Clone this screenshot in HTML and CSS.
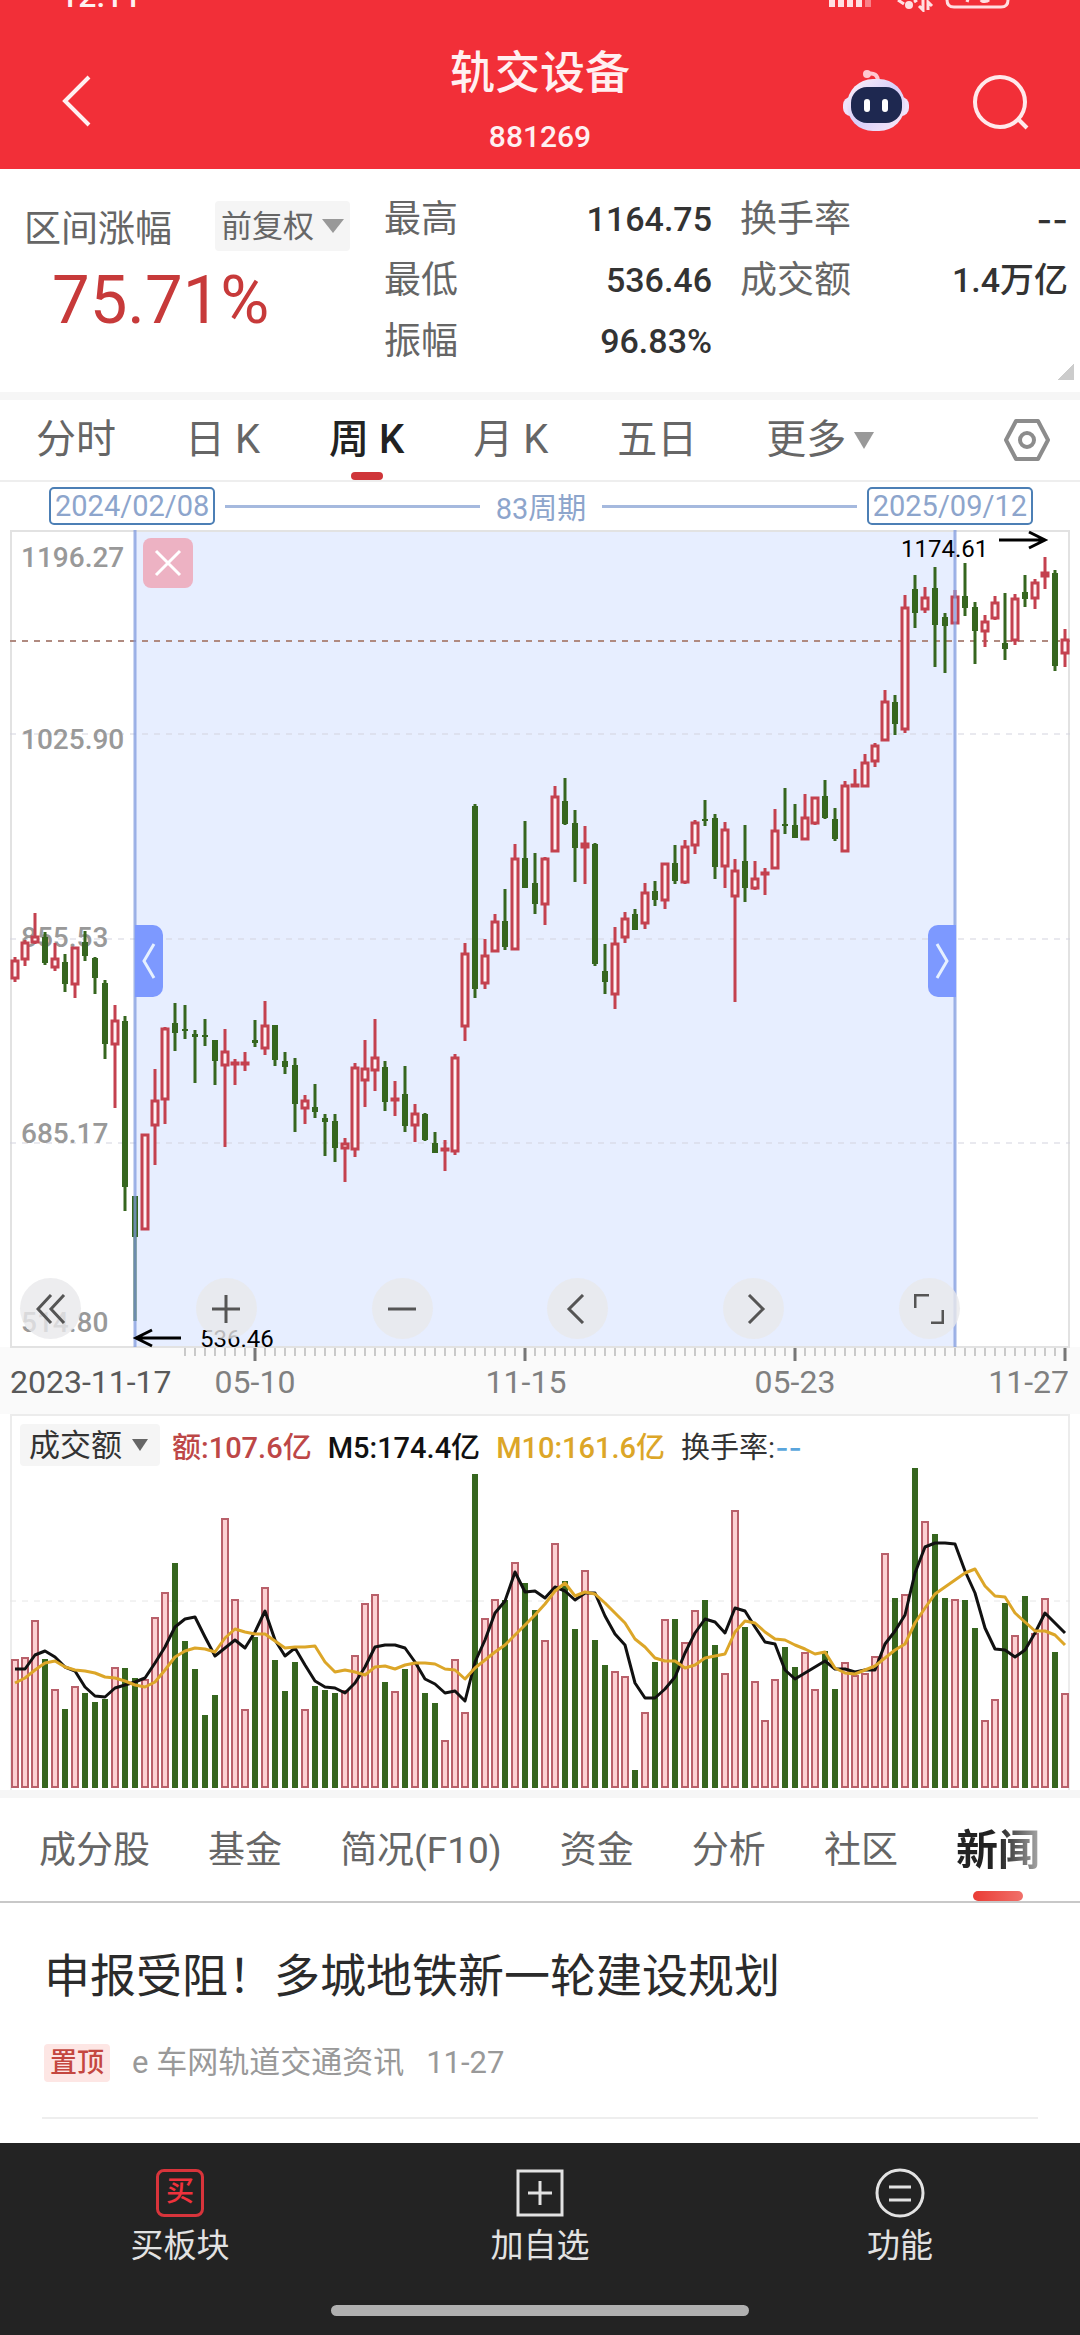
FILE: index.html
```html
<!DOCTYPE html>
<html lang="zh-CN">
<head>
    <meta charset="UTF-8">
    <meta name="viewport" content="width=device-width, initial-scale=1.0">
    <title>轨交设备 881269</title>
    <link rel="stylesheet" href="styles.css">
</head>
<body>
    <header class="header">
        <div class="status">
            <span class="status-time">12:11</span>
            <svg class="status-icons" width="184" height="12" viewBox="0 0 184 12" aria-hidden="true">
                <path d="M3 0h6v7h-6zM12 0h6v7h-6zM21 0h6v7h-6zM30 0h6v7h-6z" fill="#ffdfe2"/>
                <path d="M39 0h6v7h-6z" fill="#fa8087"/>
                <path d="M72 0l6 4M91 0l-3 2M97 0v10l-4-4M102 10v-8l4 4" fill="none" stroke="#ffdfe2" stroke-width="3"/>
                <circle cx="83" cy="5" r="4" fill="#ffdfe2"/>
                <path d="M121 0c0 5 3 7 7 7h47c4 0 7-2 7-7" fill="none" stroke="#ffdfe2" stroke-width="3"/>
                <path d="M140 0l3 1M155 0c1 2 6 2 8 0" fill="none" stroke="#ffdfe2" stroke-width="3"/>
            </svg>
        </div>
        <div class="titlebar">
            <a class="back" href="#" aria-label="返回">
                <svg width="32" height="54" viewBox="0 0 32 54"><path d="M29 3L5 27l24 24" fill="none" stroke="#fff0f1" stroke-width="4"/></svg>
            </a>
            <div class="title">
                <h1>轨交设备</h1>
                <p>881269</p>
            </div>
            <div class="title-actions">
                <button type="button" aria-label="智能助手">
                    <svg width="68" height="64" viewBox="0 0 68 64">
                        <defs>
                            <linearGradient id="shell" x1="0" y1="0" x2="1" y2="1">
                                <stop offset="0" stop-color="#fff3f7"/>
                                <stop offset="0.5" stop-color="#d7cffa"/>
                                <stop offset="1" stop-color="#fbeaf6"/>
                            </linearGradient>
                        </defs>
                        <path d="M25 6c7-2 11 1 11 8" fill="none" stroke="#ffc8d0" stroke-width="4"/>
                        <circle cx="25" cy="6" r="4" fill="#ffc8d0"/>
                        <rect x="1" y="29" width="66" height="19" rx="8" fill="#efe2fb"/>
                        <rect x="5" y="11" width="58" height="52" rx="26" fill="url(#shell)"/>
                        <rect x="9" y="19" width="51" height="36" rx="16" fill="#1e2850"/>
                        <rect x="22" y="31" width="6" height="13" rx="3" fill="#fff"/>
                        <rect x="40" y="31" width="6" height="13" rx="3" fill="#fff"/>
                    </svg>
                </button>
                <button type="button" aria-label="搜索">
                    <svg width="58" height="58" viewBox="0 0 58 58"><circle cx="28" cy="28" r="25" fill="none" stroke="#ffe9eb" stroke-width="4"/><path d="M46 45l9 9" stroke="#ffe9eb" stroke-width="4"/></svg>
                </button>
            </div>
        </div>
    </header>

    <main>
        <section class="stats">
            <div class="stat-main">
                <div class="stat-head">
                    <span class="stat-label">区间涨幅</span>
                    <span class="picker picker-adjust">
                        <select aria-label="复权方式"><option>前复权</option></select>
                        <svg width="22" height="14" viewBox="0 0 22 14"><path d="M0 0h22L11 14z" fill="#999"/></svg>
                    </span>
                </div>
                <strong class="stat-change">75.71%</strong>
            </div>
            <dl class="stat-list">
                <div><dt>最高</dt><dd>1164.75</dd></div>
                <div><dt>最低</dt><dd>536.46</dd></div>
                <div><dt>振幅</dt><dd>96.83%</dd></div>
            </dl>
            <dl class="stat-list">
                <div><dt>换手率</dt><dd class="dash">--</dd></div>
                <div><dt>成交额</dt><dd>1.4万亿</dd></div>
            </dl>
        </section>

        <nav class="periods">
            <a href="#">分时</a>
            <a href="#">日 K</a>
            <a href="#" class="active">周 K</a>
            <a href="#">月 K</a>
            <a href="#">五日</a>
            <a href="#" class="more">更多<svg width="20" height="17" viewBox="0 0 20 17"><path d="M0 0h20L10 17z" fill="#999"/></svg></a>
            <button type="button" class="settings" aria-label="图表设置">
                <svg width="46" height="42" viewBox="0 0 46 42"><path d="M12 2h22l10 19-10 19H12L2 21z" fill="none" stroke="#8c8c8c" stroke-width="4" stroke-linejoin="round"/><circle cx="23" cy="21" r="7" fill="none" stroke="#8c8c8c" stroke-width="4"/></svg>
            </button>
        </nav>

        <div class="range">
            <time>2024/02/08</time>
            <i></i>
            <span>83周期</span>
            <i></i>
            <time>2025/09/12</time>
        </div>

        <section class="kline">
            <svg id="kline" class="chart" viewBox="0 0 1060 884">
                <rect x="0" y="817" width="1060" height="67" fill="#fafafa"/>
                <rect x="125" y="0" width="820" height="817" fill="#e7eeff"/>
                <path d="M1 0v817M1059 0v817M0 1h1060M0 817h1060" stroke="#e2e2e2" stroke-width="2" fill="none"/>
                <path d="M0 204h1060M0 409h1060M0 613h1060" stroke="#d3d3de" stroke-dasharray="6 6"/>
                <path d="M0 111h1060" stroke="#b08a80" stroke-width="2" stroke-dasharray="6 6"/>
                <g class="axis-y">
                    <text x="11" y="37">1196.27</text>
                    <text x="11" y="219">1025.90</text>
                    <text x="11" y="417">855.53</text>
                    <text x="11" y="613">685.17</text>
                    <text x="11" y="802">514.80</text>
                </g>
                <g id="candles"></g>
                <path d="M125 0v817M945 0v817" stroke="#7f9ade" stroke-opacity="0.75" stroke-width="3"/>
                <g class="marks">
                    <text x="891" y="27">1174.61</text>
                    <text x="190" y="817">536.46</text>
                    <path d="M989 10h45M1019 2l16 8-16 8"/>
                    <path d="M171 808h-44M142 800l-16 8 16 8"/>
                </g>
                <g id="ticks"></g>
                <g class="axis-x">
                    <text x="0" y="863" class="first">2023-11-17</text>
                    <text x="245" y="863" text-anchor="middle">05-10</text>
                    <text x="516" y="863" text-anchor="middle">11-15</text>
                    <text x="785" y="863" text-anchor="middle">05-23</text>
                    <text x="1059" y="863" text-anchor="end">11-27</text>
                </g>
            </svg>
            <button type="button" class="close" aria-label="关闭区间">
                <svg width="28" height="28" viewBox="0 0 28 28"><path d="M2 2l24 24M26 2L2 26" stroke="#fff" stroke-width="3"/></svg>
            </button>
            <button type="button" class="handle handle-left" aria-label="区间起点">
                <svg width="14" height="38" viewBox="0 0 14 38"><path d="M12 2L2 19l10 17" fill="none" stroke="#e6f0ff" stroke-width="3"/></svg>
            </button>
            <button type="button" class="handle handle-right" aria-label="区间终点">
                <svg width="14" height="38" viewBox="0 0 14 38"><path d="M2 2l10 17L2 36" fill="none" stroke="#e6f0ff" stroke-width="3"/></svg>
            </button>
            <div class="tools">
                <button type="button" aria-label="最早"><svg viewBox="0 0 30 30"><path d="M15 1L2 15l13 14M28 1L15 15l13 14"/></svg></button>
                <button type="button" aria-label="放大"><svg viewBox="0 0 30 30"><path d="M15 1v28M1 15h28"/></svg></button>
                <button type="button" aria-label="缩小"><svg viewBox="0 0 30 30"><path d="M1 15h28"/></svg></button>
                <button type="button" aria-label="左移"><svg viewBox="0 0 30 30"><path d="M20 1L6 15l14 14"/></svg></button>
                <button type="button" aria-label="右移"><svg viewBox="0 0 30 30"><path d="M10 1l14 14-14 14"/></svg></button>
                <button type="button" aria-label="全屏"><svg viewBox="0 0 30 30"><path d="M1 14V1h14M29 16v13H17"/></svg></button>
            </div>
        </section>

        <section class="volume">
            <div class="volume-head">
                <span class="picker picker-volume">
                    <select aria-label="副图指标"><option>成交额</option></select>
                    <svg width="16" height="12" viewBox="0 0 16 12"><path d="M0 0h16L8 12z" fill="#666"/></svg>
                </span>
                <span class="v-amount">额:107.6亿</span>
                <span class="v-m5">M5:174.4亿</span>
                <span class="v-m10">M10:161.6亿</span>
                <span class="v-rate">换手率:<em class="dash">--</em></span>
            </div>
            <svg class="chart" viewBox="0 0 1060 322">
                <path d="M0 133h1060" stroke="#e6e6e6" stroke-dasharray="6 6"/>
                <g id="bars"></g>
                <path id="ma5" fill="none" stroke="#111" stroke-width="3" stroke-linejoin="round"/>
                <path id="ma10" fill="none" stroke="#dca628" stroke-width="3" stroke-linejoin="round"/>
            </svg>
        </section>

        <nav class="sections">
            <a href="#">成分股</a>
            <a href="#">基金</a>
            <a href="#">简况(F10)</a>
            <a href="#">资金</a>
            <a href="#">分析</a>
            <a href="#">社区</a>
            <a href="#" class="active">新闻</a>
        </nav>

        <article class="news">
            <h2><a href="#">申报受阻！多城地铁新一轮建设规划</a></h2>
            <p><span class="tag">置顶</span><span>e 车网轨道交通资讯</span><time>11-27</time></p>
        </article>
    </main>

    <footer class="footer">
        <nav class="actions">
            <a href="#">
                <span class="buy-icon">买</span>
                买板块
            </a>
            <a href="#">
                <svg width="50" height="50" viewBox="0 0 50 50"><path d="M3 3h44v44H3zM25 13v24M13 25h24" fill="none" stroke="#e2e2e2" stroke-width="3"/></svg>
                加自选
            </a>
            <a href="#">
                <svg width="50" height="50" viewBox="0 0 50 50"><circle cx="25" cy="25" r="23" fill="none" stroke="#e2e2e2" stroke-width="3"/><path d="M14 19h22M14 32h22" stroke="#e2e2e2" stroke-width="3"/></svg>
                功能
            </a>
        </nav>
        <div class="home-bar"></div>
    </footer>
    <script src="chart.js"></script>
</body>
</html>
```
FILE: styles.css
```css
* {
    box-sizing: border-box;
}
body {
    margin: 0;
    font-family: Roboto, "Noto Sans CJK SC", sans-serif;
    background-color: #fff;
    color: #333;
}
h1, h2, p, dl, dd {
    margin: 0;
    font-weight: normal;
}
a {
    color: inherit;
    text-decoration: none;
}
button {
    padding: 0;
    border: none;
    background: none;
    cursor: pointer;
}
svg {
    display: block;
}
.dash {
    font-family: Inter, sans-serif;
}

/* header */
.header {
    height: 169px;
    background-color: #f22f38;
    color: #fff0f1;
}
.status {
    display: flex;
    justify-content: space-between;
    height: 12px;
    padding: 0 70px 0 60px;
    overflow: hidden;
}
.status-time {
    margin-top: -22px;
    font-size: 32px;
    font-weight: 500;
    line-height: 36px;
}
.titlebar {
    display: grid;
    grid-template-columns: 1fr auto 1fr;
    padding: 28px 50px 0;
}
.back {
    padding: 34px 0 0 10px;
}
.title {
    text-align: center;
}
.title h1 {
    font-size: 45px;
    font-weight: 500;
    line-height: 68px;
}
.title p {
    font-size: 30px;
    font-weight: 500;
    line-height: 58px;
}
.title-actions {
    display: flex;
    justify-content: flex-end;
    align-items: flex-start;
    gap: 62px;
    padding-top: 28px;
}
.title-actions button:last-child {
    padding-top: 6px;
}

/* interval stats */
.stats {
    display: grid;
    grid-template-columns: 336px 328px 1fr;
    column-gap: 28px;
    padding: 20px 12px 20px 20px;
    border-bottom: 8px solid #f6f6f6;
    background: linear-gradient(135deg, transparent 50%, #ccc 50%) right 6px bottom 12px / 16px 16px no-repeat;
}
.stat-head {
    display: flex;
    align-items: center;
    justify-content: space-between;
    height: 50px;
    margin-top: 12px;
    padding: 0 6px 0 4px;
}
.stat-label {
    font-size: 37px;
    color: #666;
}
.picker {
    position: relative;
    display: flex;
    align-items: center;
    background-color: #f5f5f5;
    border-radius: 4px;
}
.picker select {
    appearance: none;
    border: none;
    background: none;
    font-family: inherit;
    font-size: 31px;
    color: inherit;
}
.picker svg {
    position: absolute;
    pointer-events: none;
}
.picker-adjust {
    color: #666;
}
.picker-adjust select {
    height: 50px;
    padding: 0 36px 0 6px;
}
.picker-adjust svg {
    right: 6px;
}
.stat-change {
    display: block;
    padding-left: 32px;
    font-size: 67px;
    font-weight: normal;
    line-height: 98px;
    color: #c73a3a;
}
.stat-list {
    font-size: 37px;
    line-height: 61px;
}
.stat-list div {
    display: flex;
    justify-content: space-between;
}
.stat-list dt {
    color: #666;
}
.stat-list dd {
    font-size: 34px;
    font-weight: 500;
}

/* period tabs */
.periods {
    display: flex;
    gap: 69px;
    height: 82px;
    padding: 0 30px 0 36px;
    border-bottom: 2px solid #eee;
    font-size: 40px;
    line-height: 80px;
    color: #666;
}
.periods a {
    position: relative;
}
.periods .active {
    font-weight: 500;
    color: #222;
}
.periods .active::after,
.sections .active::after {
    content: "";
    position: absolute;
    left: 50%;
    bottom: 0;
    width: 32px;
    height: 8px;
    margin-left: -16px;
    border-radius: 4px;
    background-color: #cf3539;
}
.more {
    display: flex;
    align-items: center;
    gap: 8px;
}
.settings {
    margin-left: auto;
}

/* selected range */
.range {
    display: flex;
    align-items: center;
    gap: 10px;
    height: 48px;
    padding: 0 47px 0 49px;
    font-size: 29px;
    color: #8da5cc;
}
.range time {
    padding: 0 4px;
    border: 2px solid #4c7fb5;
    border-radius: 5px;
    line-height: 34px;
}
.range i {
    flex: 1;
    height: 3px;
    background-color: #a5b9de;
}
.range span {
    padding: 0 6px;
}

/* candlestick chart */
.kline {
    position: relative;
    padding: 0 10px;
    background: linear-gradient(#fafafa, #fafafa) bottom / 100% 67px no-repeat;
}
.chart {
    width: 100%;
    height: auto;
}
.chart text {
    font-size: 28px;
}
.axis-y {
    fill: #999;
    font-weight: 500;
}
.axis-x {
    fill: #808080;
}
.chart .axis-x text {
    font-size: 32px;
}
.axis-x .first {
    fill: #595959;
}
.marks {
    fill: #000;
}
.chart .marks text {
    font-size: 24px;
}
.marks path {
    fill: none;
    stroke: #000;
    stroke-width: 3;
}
.up {
    fill: #fff0f3;
    stroke: #c4414f;
}
.down {
    fill: #36661f;
    stroke: #36661f;
}
.close {
    position: absolute;
    top: 8px;
    left: 143px;
    display: grid;
    place-items: center;
    width: 50px;
    height: 50px;
    border-radius: 8px;
    background-color: #edb2c3;
}
.handle {
    position: absolute;
    top: 395px;
    display: grid;
    place-items: center;
    width: 28px;
    height: 72px;
    background-color: #7d99ff;
}
.handle-left {
    left: 12.5%;
    border-radius: 0 10px 10px 0;
}
.handle-right {
    right: 11.5%;
    border-radius: 10px 0 0 10px;
}
.tools {
    position: absolute;
    left: 20px;
    right: 120px;
    bottom: 75px;
    display: flex;
    justify-content: space-between;
}
.tools button {
    display: grid;
    place-items: center;
    width: 61px;
    height: 61px;
    border-radius: 50%;
    background-color: rgba(233, 233, 235, 0.8);
}
.tools svg {
    width: 30px;
    height: 30px;
    fill: none;
    stroke: #555;
    stroke-width: 3;
}

/* turnover chart */
.volume {
    margin: 0 10px;
    border: 2px solid #ececec;
    border-bottom: none;
}
.volume .chart {
    width: calc(100% + 4px);
    margin: 0 -2px;
}
.volume-head {
    display: flex;
    align-items: center;
    gap: 16px;
    height: 52px;
    padding: 6px 8px 0;
    font-size: 29px;
    font-weight: 500;
}
.picker-volume {
    margin-right: -4px;
}
.picker-volume select {
    height: 42px;
    padding: 0 38px 0 9px;
}
.picker-volume svg {
    right: 12px;
}
.v-amount {
    color: #bd4747;
}
.v-m5 {
    color: #111;
}
.v-m10 {
    color: #dca628;
}
.v-rate {
    font-weight: normal;
}
.v-rate em {
    font-style: normal;
    font-weight: 500;
    color: #5aa5dc;
}

/* section tabs */
.sections {
    display: flex;
    justify-content: space-between;
    align-items: center;
    height: 113px;
    padding: 2px 40px 0 39px;
    border-top: 8px solid #f6f6f6;
    border-bottom: 2px solid #c8c8c8;
    font-size: 37px;
    line-height: 101px;
    color: #666;
}
.sections .active {
    position: relative;
    font-size: 42px;
    font-weight: bold;
    color: transparent;
    background: linear-gradient(90deg, #222 50%, #aaa);
    -webkit-background-clip: text;
    background-clip: text;
}
.sections .active::after {
    width: 50px;
    height: 10px;
    margin-left: -25px;
    border-radius: 5px;
    background: linear-gradient(90deg, #ea3c35, #f0706a);
}

/* news */
.news {
    margin: 0 42px 24px;
    padding: 37px 0 32px 2px;
    border-bottom: 2px solid #eee;
}
.news h2 {
    font-size: 46px;
    line-height: 72px;
    color: #2b2b2b;
}
.news p {
    display: flex;
    align-items: center;
    gap: 22px;
    margin-top: 29px;
    font-size: 31px;
    line-height: 44px;
    color: #999;
}
.tag {
    padding: 0 6px;
    border-radius: 4px;
    background-color: #fde6e4;
    font-size: 27px;
    font-weight: 500;
    line-height: 38px;
    color: #c4473f;
}

/* bottom bar */
.footer {
    height: 193px;
    padding-top: 25px;
    background-color: #232323;
    color: #e2e2e2;
}
.actions {
    display: grid;
    grid-template-columns: repeat(3, 1fr);
}
.actions a {
    display: flex;
    flex-direction: column;
    align-items: center;
    font-size: 33px;
    line-height: 56px;
}
.buy-icon {
    width: 48px;
    height: 48px;
    margin: 1px 0;
    border: 3px solid #d8343b;
    border-radius: 8px;
    font-size: 28px;
    font-weight: 500;
    line-height: 40px;
    text-align: center;
    color: #f0323c;
}
.home-bar {
    width: 418px;
    height: 11px;
    margin: 31px auto 0;
    border-radius: 6px;
    background-color: #b0b0b0;
}
```
FILE: chart.js
```js
// [direction, high, body top, body bottom, low], measured down from the top of the plot
const candles = [
    ['u', 427, 430, 449, 452], ['u', 410, 412, 430, 436], ['u', 383, 406, 413, 414], ['d', 402, 407, 433, 435],
    ['u', 413, 428, 438, 441], ['d', 424, 432, 454, 462], ['u', 417, 417, 455, 468], ['d', 401, 412, 426, 431],
    ['d', 427, 428, 448, 464], ['d', 450, 453, 514, 529], ['u', 475, 490, 515, 578], ['d', 486, 491, 657, 681],
    ['d', 666, 666, 707, 791], ['u', 604, 604, 700, 700], ['u', 539, 570, 596, 635], ['u', 497, 498, 570, 594],
    ['d', 473, 493, 503, 521], ['d', 475, 499, 501, 509], ['d', 500, 504, 507, 553], ['d', 489, 505, 507, 516],
    ['d', 510, 510, 531, 555], ['u', 499, 521, 536, 617], ['u', 529, 532, 535, 555], ['u', 522, 532, 535, 541],
    ['d', 490, 510, 513, 517], ['u', 471, 495, 519, 525], ['d', 495, 495, 530, 536], ['d', 522, 531, 537, 544],
    ['d', 528, 535, 574, 602], ['u', 565, 570, 579, 594], ['d', 554, 577, 582, 588], ['d', 584, 588, 592, 626],
    ['d', 584, 591, 618, 632], ['u', 608, 613, 619, 652], ['u', 533, 537, 620, 627], ['u', 510, 538, 551, 577],
    ['u', 489, 527, 541, 561], ['d', 531, 537, 572, 581], ['u', 551, 568, 571, 586], ['d', 536, 564, 596, 602],
    ['u', 574, 583, 596, 612], ['d', 583, 584, 610, 611], ['d', 602, 613, 623, 623], ['u', 610, 618, 621, 641],
    ['u', 524, 527, 622, 625], ['u', 413, 423, 497, 511], ['d', 274, 276, 459, 468], ['u', 409, 425, 454, 459],
    ['u', 384, 391, 422, 422], ['d', 359, 391, 417, 420], ['u', 314, 328, 420, 420], ['d', 291, 328, 358, 358],
    ['d', 323, 353, 374, 384], ['u', 327, 328, 375, 395], ['u', 256, 266, 322, 322], ['d', 248, 271, 294, 295],
    ['d', 280, 293, 318, 352], ['u', 296, 313, 318, 354], ['d', 313, 314, 434, 436], ['d', 414, 441, 452, 464],
    ['u', 397, 413, 465, 479], ['u', 382, 388, 408, 413], ['d', 379, 384, 400, 400], ['u', 353, 362, 394, 399],
    ['d', 351, 361, 370, 376], ['u', 333, 333, 371, 379], ['d', 315, 333, 351, 354], ['u', 310, 316, 353, 354],
    ['u', 290, 292, 316, 324], ['d', 270, 289, 291, 296], ['d', 284, 288, 337, 349], ['u', 292, 299, 337, 358],
    ['u', 329, 340, 367, 472], ['d', 295, 331, 358, 372], ['u', 331, 348, 359, 360], ['u', 338, 342, 345, 365],
    ['u', 279, 300, 339, 339], ['d', 258, 294, 296, 304], ['d', 274, 295, 308, 308], ['u', 264, 287, 310, 310],
    ['u', 267, 267, 294, 295], ['d', 250, 266, 288, 289], ['d', 278, 289, 309, 311], ['u', 251, 255, 322, 322],
    ['u', 239, 254, 256, 256], ['u', 224, 232, 257, 257], ['u', 213, 215, 232, 237], ['u', 160, 171, 211, 211],
    ['d', 165, 172, 194, 205], ['u', 65, 77, 200, 203], ['d', 45, 59, 83, 98], ['u', 57, 67, 80, 83],
    ['d', 37, 58, 95, 137], ['d', 83, 87, 96, 143], ['u', 60, 66, 94, 94], ['d', 33, 66, 78, 86],
    ['d', 72, 77, 101, 134], ['u', 85, 91, 102, 117], ['u', 66, 72, 89, 90], ['d', 63, 113, 119, 130],
    ['u', 64, 68, 111, 115], ['d', 45, 62, 69, 77], ['u', 49, 52, 69, 79], ['u', 27, 42, 47, 59],
    ['d', 40, 43, 136, 141], ['u', 99, 109, 124, 137]
];

// tops of the turnover bars and the two averages, all on one scale with the floor at 1042
const floor = 1042;
const volumes = [
    656, 652, 542, 657, 746, 807, 737, 759, 786, 777, 680, 684, 714, 718, 533, 458, 369, 603, 687, 825,
    765, 236, 479, 805, 591, 442, 660, 753, 666, 805, 738, 750, 759, 750, 644, 491, 464, 726, 752, 687,
    670, 759, 789, 898, 656, 815, 105, 536, 479, 480, 368, 429, 510, 599, 310, 423, 567, 392, 600, 674,
    694, 709, 987, 815, 666, 538, 537, 607, 511, 480, 615, 698, 211, 561, 724, 838, 716, 621, 681, 635,
    745, 633, 747, 667, 706, 700, 647, 341, 474, 464, 87, 244, 285, 474, 479, 480, 564, 838, 775, 489,
    584, 468, 578, 476, 636, 758
];
const ma5 = [
    686, 686, 646, 633, 650, 680, 692, 740, 766, 771, 744, 734, 727, 715, 668, 620, 562, 538, 531, 590,
    647, 624, 600, 623, 575, 514, 600, 649, 624, 675, 722, 740, 743, 759, 730, 680, 621, 615, 615, 625,
    665, 716, 732, 758, 753, 782, 665, 600, 520, 483, 397, 458, 453, 475, 443, 455, 482, 460, 460, 530,
    583, 615, 730, 773, 773, 745, 710, 640, 578, 538, 547, 580, 504, 513, 560, 607, 612, 690, 716, 698,
    680, 663, 686, 687, 695, 690, 691, 612, 572, 525, 400, 323, 312, 312, 315, 395, 460, 565, 626, 630,
    650, 630, 580, 519, 550, 580
];
const ma10 = [
    730, 715, 690, 668, 662, 680, 690, 692, 700, 710, 714, 722, 736, 742, 725, 690, 650, 634, 624, 628,
    635, 595, 567, 575, 581, 583, 603, 624, 621, 621, 619, 665, 695, 690, 696, 704, 682, 679, 687, 675,
    670, 668, 671, 686, 690, 718, 685, 660, 635, 615, 585, 555, 525, 492, 455, 430, 470, 457, 463, 490,
    520, 548, 598, 620, 654, 662, 662, 683, 675, 655, 648, 642, 575, 543, 548, 575, 597, 600, 614, 628,
    643, 636, 685, 700, 702, 690, 678, 655, 630, 612, 550, 505, 462, 442, 420, 400, 389, 440, 470, 472,
    520, 545, 573, 573, 585, 616
];

const x = i => 5 + i * 10;
const volY = v => Math.round(320 - (floor - v) / 2.985);

let html = '';
candles.forEach(([dir, high, top, bottom, low], i) => {
    const c = x(i);
    if (dir === 'u') {
        html += `<path class="up" stroke-width="3" d="M${c} ${high}V${top}M${c} ${bottom}V${low}"/>`;
        html += `<rect class="up" stroke-width="3" x="${c - 3}" y="${top + 1}" width="6" height="${Math.max(bottom - top - 2, 1)}"/>`;
    } else {
        html += `<path class="down" stroke-width="3" d="M${c} ${high}V${low}"/>`;
        html += `<rect class="down" stroke="none" stroke-width="0" x="${c - 3}" y="${top}" width="6" height="${bottom - top}"/>`;
    }
});
document.getElementById('candles').innerHTML = html;

html = '';
candles.forEach(([dir], i) => {
    const y = volY(volumes[i]);
    html += dir === 'u'
        ? `<rect x="${x(i) - 3}" y="${y + 1}" width="6" height="${318 - y}" fill="#fdd0d2" stroke="#b9606a" stroke-width="2"/>`
        : `<rect x="${x(i) - 3}" y="${y}" width="6" height="${320 - y}" fill="#36661f"/>`;
});
document.getElementById('bars').innerHTML = html;

const line = values => 'M' + values.map((v, i) => `${x(i)} ${volY(v)}`).join('L');
document.getElementById('ma5').setAttribute('d', line(ma5));
document.getElementById('ma10').setAttribute('d', line(ma10));

// one tick per week, a long one at each dated week
html = '';
for (let i = 17; i <= 105; i++) {
    const major = [24, 51, 78, 105].includes(i);
    html += `<path d="M${x(i)} 818v${major ? 13 : 8}" stroke="${major ? '#777' : '#999'}" stroke-width="${major ? 3 : 1}"/>`;
}
document.getElementById('ticks').innerHTML = html;
```
